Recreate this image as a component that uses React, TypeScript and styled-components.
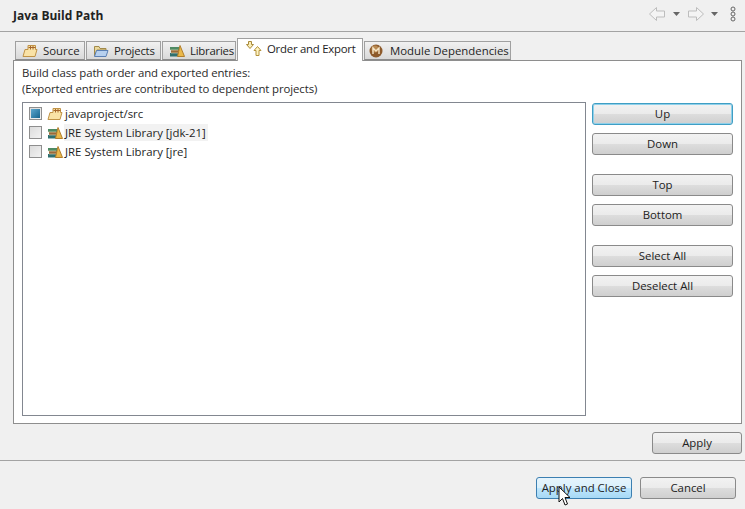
import React from 'react';
import styled, { createGlobalStyle } from 'styled-components';

const GlobalStyle = createGlobalStyle`
  html, body {
    margin: 0;
    padding: 0;
    background: #f0f0f0;
  }
  body {
    font-family: 'Open Sans', 'Noto Sans', 'Liberation Sans', sans-serif;
    font-size: 11.4px;
    color: #1e1e1e;
    overflow: hidden;
  }
`;

const Dialog = styled.div`
  position: relative;
  width: 745px;
  height: 509px;
  display: flex;
  flex-direction: column;
  background: #f0f0f0;
  overflow: hidden;
`;

const TitleBar = styled.div`
  height: 32px;
  box-sizing: border-box;
  flex: none;
  display: flex;
  align-items: center;
  justify-content: space-between;
  padding: 0 8px 1px 13px;
  border-bottom: 1px solid #a3a3a3;
`;

const Title = styled.div`
  font-weight: 700;
  font-size: 12px;
  color: #222;
`;

const NavIcons = styled.div`
  display: flex;
  align-items: center;
  margin-bottom: 3px;
`;

const Body = styled.div`
  flex: none;
  height: 428px;
  box-sizing: border-box;
  display: flex;
  flex-direction: column;
  padding: 6px 3px 0 13px;
`;

const TabRow = styled.div`
  height: 22px;
  flex: none;
  display: flex;
  align-items: flex-end;
  padding-left: 2px;
  position: relative;
  z-index: 1;
`;

const Tab = styled.div<{ $active?: boolean; $width: number; $inset?: number; $tight?: boolean }>`
  width: ${(p) => p.$width}px;
  height: ${(p) => (p.$active ? 23 : 19)}px;
  box-sizing: border-box;
  display: flex;
  align-items: center;
  gap: ${(p) => (p.$inset ? 6 : 5)}px;
  padding-left: ${(p) => p.$inset ?? (p.$active ? 7 : 6)}px;
  padding-bottom: ${(p) => (p.$active ? 4 : 0)}px;
  margin-right: 1px;
  border: 1px solid #a0a0a0;
  border-bottom: ${(p) => (p.$active ? 'none' : '1px solid #8c8c8c')};
  background: ${(p) => (p.$active ? '#fff' : 'linear-gradient(#f1f1f1, #d9d9d9)')};
  margin-bottom: ${(p) => (p.$active ? -1 : 0)}px;
  letter-spacing: ${(p) => (p.$tight ? -0.25 : 0)}px;
  white-space: nowrap;
`;

const TabPanel = styled.div`
  height: 364px;
  flex: none;
  box-sizing: border-box;
  background: #fff;
  border: 1px solid #8e8e8e;
  padding: 4px 8px 7px 8px;
  display: flex;
  flex-direction: column;
`;

const Description = styled.div`
  line-height: 16px;
  height: 32px;
  flex: none;
  margin-bottom: 5px;
  color: #2a2a2a;
  letter-spacing: -0.1px;
`;

const PanelColumns = styled.div`
  flex: 1;
  display: flex;
  gap: 6px;
  min-height: 0;
`;

const EntryList = styled.div`
  width: 564px;
  box-sizing: border-box;
  flex: none;
  border: 1px solid #828790;
  padding: 1px 0 0 6px;
`;

const Entry = styled.div`
  height: 19px;
  display: flex;
  align-items: center;
  gap: 5px;
`;

const EntryCheck = styled.div<{ $checked?: boolean }>`
  width: 13px;
  height: 13px;
  flex: none;
  box-sizing: border-box;
  border: 1px solid #8e8e8e;
  background: linear-gradient(135deg, #dcdcdc, #f2f2f2);
  display: flex;
  align-items: center;
  justify-content: center;
  &::after {
    content: '';
    display: ${(p) => (p.$checked ? 'block' : 'none')};
    width: 9px;
    height: 9px;
    background: linear-gradient(135deg, #5fa8cf, #17658f);
  }
`;

const EntryLabel = styled.span<{ $selected?: boolean }>`
  margin-left: -4px;
  padding: 1px 2px 1px 1px;
  background: ${(p) => (p.$selected ? '#f2f2f2' : 'transparent')};
  white-space: nowrap;
`;

const ButtonColumn = styled.div`
  flex: 1;
  display: flex;
  flex-direction: column;
  padding-top: 1px;
`;

const ButtonGroup = styled.div`
  display: flex;
  flex-direction: column;
  gap: 8px;
  margin-bottom: 19px;
`;

const PushButton = styled.div<{ $focused?: boolean; $hover?: boolean }>`
  height: 22px;
  box-sizing: border-box;
  display: flex;
  align-items: center;
  justify-content: center;
  padding-bottom: 1px;
  border-radius: 3px;
  white-space: nowrap;
  color: #222;
  border: 1px solid ${(p) => (p.$hover ? '#3c7fb1' : p.$focused ? '#3f9ec4' : '#8a8a8a')};
  box-shadow: ${(p) => (p.$focused ? '0 0 0 1px #8fd0ea inset' : 'none')};
  background: ${(p) =>
    p.$hover
      ? 'linear-gradient(#e6f4fc 0%, #d9f0fc 50%, #bee6fd 51%, #a7d9f5 100%)'
      : 'linear-gradient(#f2f2f2 0%, #ebebeb 50%, #dddddd 51%, #cfcfcf 100%)'};
`;

const ApplyRow = styled.div`
  height: 37px;
  flex: none;
  box-sizing: border-box;
  padding-top: 8px;
  display: flex;
  justify-content: flex-end;
`;

const ApplyButton = styled(PushButton)`
  width: 90px;
`;

const Footer = styled.div`
  flex: 1;
  border-top: 1px solid #a3a3a3;
  display: flex;
  justify-content: flex-end;
  align-items: flex-start;
  gap: 8px;
  padding: 16px 9px 0 0;
`;

const FooterButton = styled(PushButton)`
  width: 96px;
`;

const Pointer = styled.svg`
  position: absolute;
  left: 558px;
  top: 486px;
`;

const FolderPackageIcon = () => (
  <svg width="16" height="14" viewBox="0 0 16 14">
    <path d="M1 12.5 L3 5.5 H6 V1.5 H13.5 V5.5 H15 L13 12.5 Z" fill="#f9e2a6" stroke="#c09347" strokeWidth="1" />
    <path d="M8.5 2 V5.5 M11 2 V5.5 M6.5 3.5 H13.5" stroke="#a5662c" strokeWidth="1" fill="none" />
  </svg>
);

const ProjectsIcon = () => (
  <svg width="16" height="14" viewBox="0 0 16 14">
    <path d="M1.5 12 V2.5 H6 L7 4.5 H13 V6 H4 Z" fill="#e9d79b" stroke="#a28a4a" />
    <path d="M1.5 12.5 L3.5 6.5 H15 L13 12.5 Z" fill="#b7d0ee" stroke="#5b80b4" />
  </svg>
);

const LibraryIcon = () => (
  <svg width="16" height="14" viewBox="0 0 16 14">
    <rect x="1" y="3" width="9" height="3" fill="#4f8a63" />
    <rect x="2" y="6" width="8" height="3" fill="#9a6a3a" />
    <rect x="1" y="9" width="9" height="3.5" fill="#2f6f6f" />
    <path d="M1 6 H9 M2 9 H9" stroke="#e6e0c0" strokeWidth="0.6" />
    <path d="M8.5 12.5 L11 1.5 L15.5 12.5 Z" fill="#eab84a" stroke="#b07e2c" />
  </svg>
);

const OrderIcon = () => (
  <svg width="17" height="15" viewBox="0 0 17 15">
    <path d="M3.5 0.5 H6.5 V3.5 H8.5 L5 7.5 L1.5 3.5 H3.5 Z" fill="#fbeeb8" stroke="#a98a3a" />
    <path d="M11 14.5 H14 V9.5 H16 L12.5 5.5 L9 9.5 H11 Z" fill="#fff4c2" stroke="#b4923c" />
  </svg>
);

const ModuleIcon = () => (
  <svg width="16" height="16" viewBox="0 0 16 16">
    <circle cx="8" cy="8" r="6.5" fill="#8d5a2b" />
    <circle cx="7" cy="6" r="3.5" fill="#b98a52" />
    <path d="M5 11 V5 L8 8 L11 5 V11" stroke="#f5e6c8" strokeWidth="1.4" fill="none" />
  </svg>
);

const HistoryIcons = () => (
  <svg width="88" height="16" viewBox="0 0 88 16">
    <path d="M0.5 8 L7.5 1.5 V5 H15.5 V11 H7.5 V14.5 Z" fill="#f4f4f4" stroke="#bdbdbd" />
    <path d="M24 6 H31 L27.5 10 Z" fill="#666" />
    <path d="M54.5 8 L47.5 1.5 V5 H39.5 V11 H47.5 V14.5 Z" fill="#f4f4f4" stroke="#bdbdbd" />
    <path d="M62 6 H69 L65.5 10 Z" fill="#666" />
    <g fill="#f0f0f0" stroke="#666" strokeWidth="1">
      <circle cx="84" cy="3" r="2" />
      <circle cx="84" cy="8" r="2" />
      <circle cx="84" cy="13" r="2" />
    </g>
  </svg>
);

const buttonGroups = [
  [{ label: 'Up', focused: true }, { label: 'Down' }],
  [{ label: 'Top' }, { label: 'Bottom' }],
  [{ label: 'Select All' }, { label: 'Deselect All' }],
];

export default function App() {
  return (
    <Dialog>
      <GlobalStyle />
      <TitleBar>
        <Title>Java Build Path</Title>
        <NavIcons>
          <HistoryIcons />
        </NavIcons>
      </TitleBar>

      <Body>
        <TabRow>
          <Tab $width={70}>
            <FolderPackageIcon />
            Source
          </Tab>
          <Tab $width={75} $tight>
            <ProjectsIcon />
            Projects
          </Tab>
          <Tab $width={74} $tight>
            <LibraryIcon />
            Libraries
          </Tab>
          <Tab $active $width={126} $tight>
            <OrderIcon />
            Order and Export
          </Tab>
          <Tab $width={147} $inset={3}>
            <ModuleIcon />
            Module Dependencies
          </Tab>
        </TabRow>

        <TabPanel>
          <Description>
            Build class path order and exported entries:
            <br />
            (Exported entries are contributed to dependent projects)
          </Description>
          <PanelColumns>
            <EntryList>
              <Entry>
                <EntryCheck $checked />
                <FolderPackageIcon />
                <EntryLabel>javaproject/src</EntryLabel>
              </Entry>
              <Entry>
                <EntryCheck />
                <LibraryIcon />
                <EntryLabel $selected>JRE System Library [jdk-21]</EntryLabel>
              </Entry>
              <Entry>
                <EntryCheck />
                <LibraryIcon />
                <EntryLabel>JRE System Library [jre]</EntryLabel>
              </Entry>
            </EntryList>
            <ButtonColumn>
              {buttonGroups.map((group) => (
                <ButtonGroup key={group[0].label}>
                  {group.map((b) => (
                    <PushButton key={b.label} $focused={b.focused}>
                      {b.label}
                    </PushButton>
                  ))}
                </ButtonGroup>
              ))}
            </ButtonColumn>
          </PanelColumns>
        </TabPanel>

        <ApplyRow>
          <ApplyButton>Apply</ApplyButton>
        </ApplyRow>
      </Body>

      <Footer>
        <FooterButton $hover>Apply and Close</FooterButton>
        <FooterButton>Cancel</FooterButton>
      </Footer>

      <Pointer width="14" height="21" viewBox="0 0 14 21">
        <path d="M1 1 V16 L4.5 12.5 L7 19 L9.5 18 L7 11.5 H12 Z" fill="#fff" stroke="#111" strokeWidth="1" />
      </Pointer>
    </Dialog>
  );
}
